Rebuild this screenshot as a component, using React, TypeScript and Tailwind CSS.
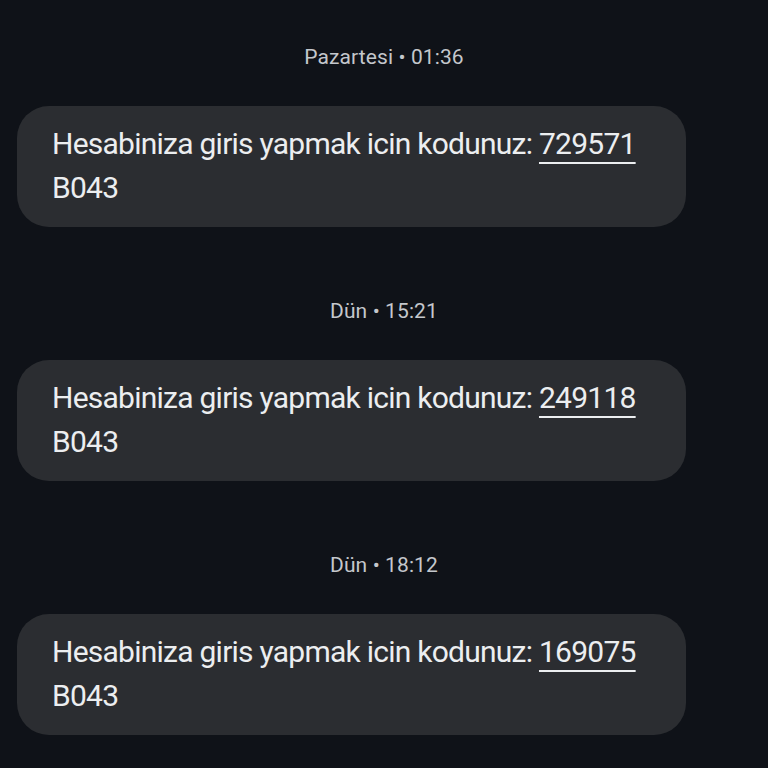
import React from "react";

const msgs = [
  { when: "Pazartesi • 01:36", code: "729571" },
  { when: "Dün • 15:21", code: "249118" },
  { when: "Dün • 18:12", code: "169075" },
];

export default function App() {
  return (
    <div
      className="w-[768px] h-[768px] overflow-hidden bg-[#0f1218] flex flex-col pt-[44px]"
      style={{ fontFamily: "Roboto, 'Noto Sans', sans-serif" }}
    >
      {msgs.map((m, i) => (
        <div key={i} className="flex flex-col h-[254px] shrink-0">
          <div className="h-[28px] flex items-center justify-center text-[21px] text-[#c4c7cc] tracking-[0.1px]">
            {m.when}
          </div>
          <div className="mt-[34px] ml-[17px] w-[669px] h-[121px] shrink-0 rounded-[32px] bg-[#2b2d31] pl-[35px] pr-[16px] pt-[16px] text-[30px] leading-[44px] tracking-[-0.75px] text-[#eceef0]">
            <div className="whitespace-nowrap">
              Hesabiniza giris yapmak icin kodunuz:{" "}
              <span className="underline decoration-[2px] underline-offset-[8px]">{m.code}</span>
            </div>
            <div>B043</div>
          </div>
        </div>
      ))}
    </div>
  );
}
